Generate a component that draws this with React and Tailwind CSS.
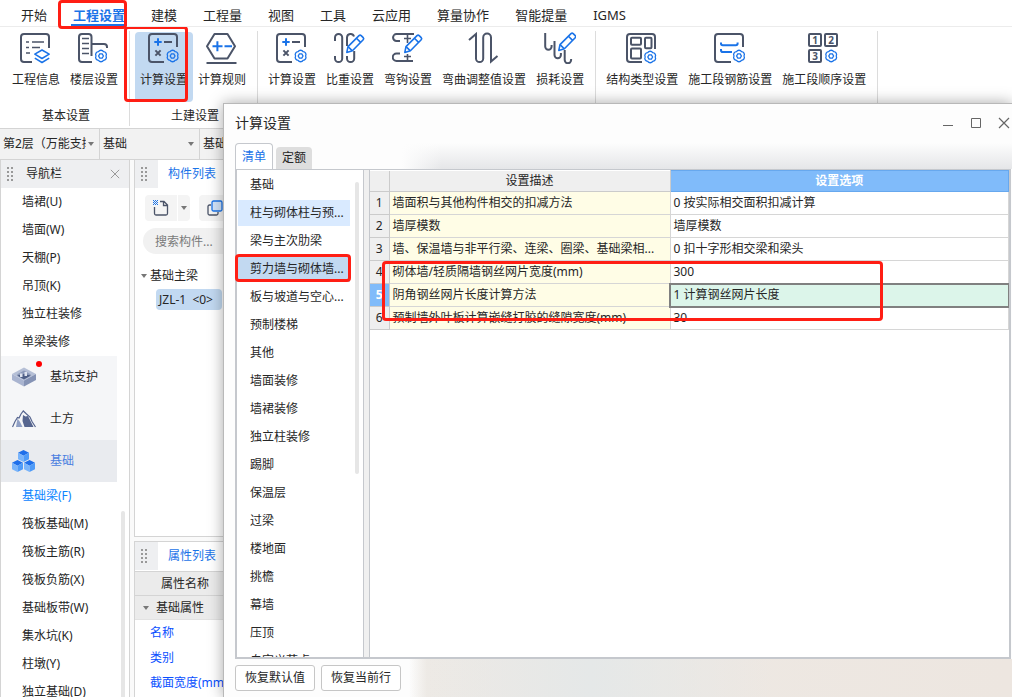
const DARK = "#4b5468";
const BLUE = "#1a73e8";

const menuTabs = ["开始", "工程设置", "建模", "工程量", "视图", "工具", "云应用", "算量协作", "智能提量", "IGMS"];

const finishItems = ["墙裙(U)", "墙面(W)", "天棚(P)", "吊顶(K)", "独立柱装修", "单梁装修"];
const foundationItems = ["基础梁(F)", "筏板基础(M)", "筏板主筋(R)", "筏板负筋(X)", "基础板带(W)", "集水坑(K)", "柱墩(Y)", "独立基础(D)"];

const categories = [
  "基础", "柱与砌体柱与预...", "梁与主次肋梁", "剪力墙与砌体墙...", "板与坡道与空心...", "预制楼梯",
  "其他", "墙面装修", "墙裙装修", "独立柱装修", "踢脚", "保温层", "过梁", "楼地面", "挑檐", "幕墙", "压顶", "自定义节点",
];

const rows = [
  ["墙面积与其他构件相交的扣减方法", "0 按实际相交面积扣减计算"],
  ["墙厚模数", "墙厚模数"],
  ["墙、保温墙与非平行梁、连梁、圈梁、基础梁相...", "0 扣十字形相交梁和梁头"],
  ["砌体墙/轻质隔墙钢丝网片宽度(mm)", "300"],
  ["阴角钢丝网片长度计算方法", "1 计算钢丝网片长度"],
  ["预制墙外叶板计算嵌缝打胶的缝隙宽度(mm)", "30"],
];

/* ---------- ribbon icons ---------- */

function Icon({ children }) {
  return (
    <svg width="32" height="32" viewBox="0 0 32 32" fill="none" stroke={DARK} strokeWidth="2" aria-hidden="true">
      {children}
    </svg>
  );
}

function Gear({ x, y }) {
  return (
    <g transform={`translate(${x} ${y})`} stroke={BLUE} strokeWidth="1.3">
      <path d="M5 0A2.9 2.9 0 0 1 2.5 4.33A2.9 2.9 0 0 1 -2.5 4.33A2.9 2.9 0 0 1 -5 0A2.9 2.9 0 0 1 -2.5 -4.33A2.9 2.9 0 0 1 2.5 -4.33A2.9 2.9 0 0 1 5 0Z" />
      <path d="M2.4 0L1.2 2.1H-1.2L-2.4 0L-1.2 -2.1H1.2Z" />
    </g>
  );
}

function Pencil({ x = 0, y = 0 }) {
  return (
    <g transform={`translate(${x} ${y})`} stroke={BLUE} strokeWidth="1.6" strokeLinejoin="round" fill="#fff">
      <path d="M12.8 20.4L14 14.6L25 3.6a1.6 1.6 0 0 1 2.2 0l2 2a1.6 1.6 0 0 1 0 2.2L18.4 18.8Z" />
      <path d="M22.4 6.2l4.2 4.2M14 14.6l4.4 4.2" />
    </g>
  );
}

function InfoIcon() {
  return (
    <Icon>
      <path d="M12 30H4a3 3 0 0 1-3-3V5a3 3 0 0 1 3-3h22a3 3 0 0 1 3 3v11" />
      <path d="M6 10h3M12 10h12M6 15.5h3M12 15.5h8M6 21h4" strokeWidth="1.6" />
      <g stroke={BLUE} strokeWidth="1.5" strokeLinejoin="round">
        <path d="M22 18l7.2 4.2L22 26.500l-7.2-4.3z" />
        <path d="M14.8 26.2l7.2 4.3l7.2-4.3" />
      </g>
    </Icon>
  );
}

function FloorIcon() {
  return (
    <Icon>
      <path d="M14 30H4a3 3 0 0 1-3-3V5a3 3 0 0 1 3-3h6.500a3 3 0 0 1 3 3V24" />
      <path d="M4 6.500h7M4 11.500h7M4 16.500h7M4 21.500h7" strokeWidth="1.6" />
      <path d="M14 12h12a3 3 0 0 1 3 3v1" />
      <Gear x={23} y={24} />
    </Icon>
  );
}

function CalcIcon() {
  return (
    <Icon>
      <path d="M16 30H4a3 3 0 0 1-3-3V5a3 3 0 0 1 3-3h22a3 3 0 0 1 3 3v10" />
      <path d="M6.3 10h7.4M10 6.3v7.4" stroke={BLUE} />
      <path d="M16 10h8M7.4 18.4l5.2 5.2M12.6 18.4l-5.2 5.2" />
      <Gear x={24.6} y={24} />
    </Icon>
  );
}

function RuleIcon() {
  return (
    <Icon>
      <path d="M8.5 2h13l7.5 12.3L21.5 26.5h-13L1 14.3z" strokeLinejoin="round" />
      <path d="M0.5 31h30" />
      <path d="M6.5 14.3h10M11.4 9.3v10M18.5 14.3h7.500" stroke={BLUE} />
    </Icon>
  );
}

function WeightIcon() {
  return (
    <Icon>
      <path d="M1 9V5.500a3.600 3.600 0 0 1 7.200 0V26.500a3.600 3.600 0 0 1-7.200 0V24" />
      <path d="M13 14V5.500a3.600 3.600 0 0 1 7 -1M20.200 19V26.500a3.600 3.600 0 0 1-7.200 0V24" />
      <Pencil />
    </Icon>
  );
}

function HookIcon() {
  return (
    <Icon>
      <path d="M8 9H4.500a3.400 3.400 0 0 1 0-6.900H22M8 21.500H4.500a3.600 3.600 0 0 0 0 7.500H21" />
      <path d="M15.500 2v9M12 6.500h7M15.500 22v7M12 24.500h7" strokeWidth="1.6" />
      <Pencil />
    </Icon>
  );
}

function CurveIcon() {
  return (
    <Icon>
      <path d="M1 8L8 2V26.500a3.600 3.600 0 0 0 7.200 0V5.500a3.900 3.900 0 0 1 7.800 0V29.500L29.500 24" />
    </Icon>
  );
}

function LossIcon() {
  return (
    <Icon>
      <path d="M1.200 1v13.500a3.200 3.200 0 0 0 6.400 0V13" />
      <path d="M10.500 9v14a3.200 3.200 0 0 0 6.400 0V21" />
      <path d="M20.700 18v10a3.200 3.200 0 0 0 6.400 0V27" />
      <Pencil x={2} y={-2} />
    </Icon>
  );
}

function StructIcon() {
  return (
    <Icon>
      <path d="M16 30H4a3 3 0 0 1-3-3V5a3 3 0 0 1 3-3h22a3 3 0 0 1 3 3v12" />
      <rect x="5" y="5.700" width="10" height="7" rx="1" />
      <rect x="19" y="5.700" width="6.500" height="10.500" rx="1" />
      <rect x="5" y="16.500" width="10" height="10" rx="1" />
      <Gear x={24.2} y={25} />
    </Icon>
  );
}

function RebarIcon() {
  return (
    <Icon>
      <path d="M17 30H4a3 3 0 0 1-3-3V5a3 3 0 0 1 3-3h22a3 3 0 0 1 3 3v10" />
      <path d="M7 10.500v1a1.800 1.800 0 0 0 1.800 1.800h13a1.800 1.800 0 0 0 1.800-1.800v-1M7 17v1.200a1.800 1.800 0 0 0 1.800 1.800H18" stroke={BLUE} />
      <Gear x={25} y={24} />
    </Icon>
  );
}

function OrderIcon() {
  return (
    <Icon>
      <rect x="1" y="2" width="12" height="12" rx="1" />
      <rect x="17" y="2" width="12" height="12" rx="1" />
      <rect x="1" y="18" width="12" height="12" rx="1" />
      <g fill={DARK} stroke="none" fontSize="10" fontWeight="700" textAnchor="middle">
        <text x="7" y="11.600">1</text>
        <text x="23" y="11.600">2</text>
        <text x="7" y="27.600">3</text>
      </g>
      <Gear x={23.2} y={24} />
    </Icon>
  );
}

/* ---------- navigation icons ---------- */

function PitIcon() {
  return (
    <svg width="24" height="20" viewBox="0 0 24 20" aria-hidden="true">
      <path d="M12 0.5L24 7L12 13.5L0 7z" fill="#b5bfd6" />
      <path d="M0 7l12 6.500V19.500L0 13z" fill="#a9b4d0" />
      <path d="M24 7l-12 6.500V19.500L24 13z" fill="#8593b5" />
      <path d="M12 3.500L19 7.500L12 11.500L5 7.500z" fill="#8d9aba" />
      <path d="M5 8.500L12 7l7 1.500L12 12.500z" fill="#4f5f86" />
      <path d="M8 6.500v3.500h2.500V6.500zM12.500 5v4h2.500V5z" fill="#dfe4ef" />
    </svg>
  );
}

function MountainIcon() {
  return (
    <svg width="24" height="18" viewBox="0 0 24 18" fill="none" aria-hidden="true">
      <path d="M5.500 8.500L8 12l2.500 5H4z" fill="#8f9fc4" />
      <path d="M11 5l2.500 1.500l2.500-0.500L21.500 17H12.500L10.500 11z" fill="#56658f" />
      <path d="M0.500 17L3 11.500l2.500-4l1.500 0.500L9 4l2.300-3L14.500 4l3.500 3l2 4.500L23.500 17" stroke="#56658f" strokeWidth="1.2" />
    </svg>
  );
}

function Cube({ x, y }) {
  return (
    <g transform={`translate(${x} ${y})`}>
      <path d="M5.5 0L11 2.8L5.5 5.8L0 2.8z" fill="#1f6fea" />
      <path d="M0 2.800l5.500 3V12L0 9.200z" fill="#79b4fb" />
      <path d="M11 2.800l-5.500 3V12L11 9.200z" fill="#4f9bf8" />
    </g>
  );
}

function CubesIcon() {
  return (
    <svg width="24" height="22" viewBox="0 0 24 22" aria-hidden="true">
      <Cube x={6} y={0} />
      <Cube x={0} y={10} />
      <Cube x={12} y={10} />
    </svg>
  );
}

function Grip() {
  return (
    <svg width="7" height="14" viewBox="0 0 7 14" fill="#999" aria-hidden="true">
      {[0, 4, 8, 12].map((y) => (
        <g key={y}>
          <rect x="0" y={y} width="2" height="2" />
          <rect x="4" y={y} width="2" height="2" />
        </g>
      ))}
    </svg>
  );
}

function Caret({ className = "" }) {
  return (
    <svg width="6" height="4" viewBox="0 0 6 4" className={className} fill="#777" aria-hidden="true">
      <path d="M0 0h6L3 4z" />
    </svg>
  );
}

function Cross({ size, color }) {
  return (
    <svg width={size} height={size} viewBox="0 0 12 12" stroke={color} strokeWidth="1.2" aria-hidden="true">
      <path d="M1 1l10 10M11 1L1 11" />
    </svg>
  );
}

/* ---------- page parts ---------- */

function Tool({ label, icon, active }) {
  return (
    <button className={`flex h-[70px] flex-col items-center px-[5px] whitespace-nowrap ${active ? "rounded bg-[#c2d9f1]" : ""}`}>
      {icon}
      <span className="mt-2 leading-4">{label}</span>
    </button>
  );
}

function ToolGroup({ title, className = "", children }) {
  return (
    <div className="relative flex shrink-0 flex-col border-r border-[#dcdcdc] pt-px pr-[6px] pl-[5px]">
      <div className={`flex ${className}`}>{children}</div>
      <div className="mt-1 pl-1 text-center leading-5">{title}</div>
    </div>
  );
}

function Ribbon() {
  return (
    <div className="mt-1 mb-[2px] flex h-[95px] shrink-0">
      <ToolGroup title="基本设置" className="pl-[2px]">
        <Tool label="工程信息" icon={<InfoIcon />} />
        <Tool label="楼层设置" icon={<FloorIcon />} />
      </ToolGroup>
      <ToolGroup title="土建设置">
        <Tool label="计算设置" icon={<CalcIcon />} active />
        <Tool label="计算规则" icon={<RuleIcon />} />
        <div className="pointer-events-none absolute -top-[5px] -left-[6px] h-[76px] w-[64px] rounded-sm border-3 border-[#ff1e14]" />
      </ToolGroup>
      <ToolGroup title="钢筋设置">
        <Tool label="计算设置" icon={<CalcIcon />} />
        <Tool label="比重设置" icon={<WeightIcon />} />
        <Tool label="弯钩设置" icon={<HookIcon />} />
        <Tool label="弯曲调整值设置" icon={<CurveIcon />} />
        <Tool label="损耗设置" icon={<LossIcon />} />
      </ToolGroup>
      <ToolGroup title="">
        <Tool label="结构类型设置" icon={<StructIcon />} />
        <Tool label="施工段钢筋设置" icon={<RebarIcon />} />
        <Tool label="施工段顺序设置" icon={<OrderIcon />} />
      </ToolGroup>
    </div>
  );
}

function Picker({ label, value }) {
  return (
    <label className="relative flex w-[100px] items-center border-r border-[#d4d4d4]">
      <select aria-label={label} className="h-full w-[86px] appearance-none overflow-hidden pl-[3px] text-[12px] outline-none">
        <option>{value}</option>
      </select>
      <Caret className="absolute right-[5px]" />
    </label>
  );
}

function NavItem({ label, active }) {
  return (
    <a href="#" className={`flex h-7 shrink-0 items-center pl-[21px] ${active ? "text-[#0b84ff]" : ""}`}>
      {label}
    </a>
  );
}

function NavGroup({ label, icon, active, dot }) {
  return (
    <a href="#" className={`relative mr-3 flex h-[42px] shrink-0 items-center pl-[11px] ${active ? "bg-[#e9ebef] text-[#4a7ee0]" : "bg-[#f5f6f8]"}`}>
      <span className="flex w-[38px] items-center">{icon}</span>
      {label}
      {dot && <span className="absolute top-[5px] left-[35px] size-[6px] rounded-full bg-[#ff0000]" />}
    </a>
  );
}

function NavPanel() {
  return (
    <aside className="relative flex w-[130px] shrink-0 flex-col overflow-hidden border-x border-[#d4d4d4] bg-white">
      <div className="flex h-7 shrink-0 items-center bg-[#eeeff1] pl-[6px]">
        <Grip />
        <span className="ml-3 flex-1">导航栏</span>
        <button aria-label="关闭导航栏" className="mr-[9px]">
          <Cross size={10} color="#999" />
        </button>
      </div>
      {finishItems.map((t) => <NavItem key={t} label={t} />)}
      <NavGroup label="基坑支护" icon={<PitIcon />} dot />
      <NavGroup label="土方" icon={<MountainIcon />} />
      <NavGroup label="基础" icon={<CubesIcon />} active />
      <div className="relative flex flex-col">
        {foundationItems.map((t, i) => <NavItem key={t} label={t} active={i === 0} />)}
        <div className="absolute top-[29px] right-[4px] bottom-0 w-1 rounded-full bg-[#e6e6e6]" />
      </div>
    </aside>
  );
}

function PanelHead({ title }) {
  return (
    <div className="flex h-7 shrink-0 items-center">
      <div className="flex h-full w-[23px] items-center bg-[#eeeff1] pl-[6px]"><Grip /></div>
      <span className="ml-[10px] text-[#1a73e8]">{title}</span>
    </div>
  );
}

function ComponentPanel() {
  return (
    <section className="flex flex-1 flex-col border border-t-0 border-[#d4d4d4] bg-white">
      <PanelHead title="构件列表" />
      <div className="mt-[7px] flex pl-[10px]">
        <button aria-label="新建" className="flex h-[26px] w-8 items-center justify-center rounded-l bg-[#f4f4f4]">
          <svg width="16" height="16" viewBox="0 0 16 16" fill="none" stroke={DARK} strokeWidth="1.3">
            <path d="M1.500 7v6.500a1.500 1.500 0 0 0 1.500 1.500h10a1.500 1.500 0 0 0 1.500-1.500V5L11 1.500H7M10.500 1.500V5.500H14.500" />
            <g fill={BLUE} stroke="none">
              {[0, 1, 2, 3, 4].map((y) =>
                [0, 1, 2, 3, 4].map((x) => (x + y) % 2 === 0 && <rect key={`${x}-${y}`} x={x} y={y} width="1" height="1" />)
              )}
            </g>
          </svg>
        </button>
        <button aria-label="新建选项" className="ml-px flex h-[26px] w-3 items-center justify-center rounded-r bg-[#f4f4f4]">
          <Caret />
        </button>
        <button aria-label="复制" className="ml-[9px] flex h-[26px] w-8 items-center justify-center rounded bg-[#f4f4f4]">
          <svg width="16" height="16" viewBox="0 0 16 16" fill="none" strokeWidth="1.3">
            <path d="M4 5H2.500A1.500 1.500 0 0 0 1 6.500v7A1.500 1.500 0 0 0 2.500 15h7a1.500 1.500 0 0 0 1.500-1.500V12" stroke={DARK} />
            <rect x="5" y="1" width="10" height="10" rx="1.5" stroke={BLUE} fill="#d3e4fa" />
          </svg>
        </button>
      </div>
      <input aria-label="搜索构件" placeholder="搜索构件..." className="mt-[7px] ml-2 h-[26px] rounded-full bg-[#f1f1f1] px-3 text-[12px] outline-none placeholder:text-[#7a7a7a]" />
      <div className="mt-3 flex h-5 items-center pl-[6px]">
        <Caret />
        <span className="ml-[3px]">基础主梁</span>
      </div>
      <a href="#" className="mt-[3px] ml-[21px] flex h-[21px] w-[66px] items-center rounded-sm bg-[#c2d9f1] pl-[3px] whitespace-pre">{"JZL-1  <0>"}</a>
    </section>
  );
}

function PropertyPanel() {
  return (
    <section className="flex shrink-0 flex-col border border-b-0 border-[#d4d4d4] bg-white pb-[2px]">
      <PanelHead title="属性列表" />
      <div className="mt-px flex h-[25px] items-center border-y border-[#d4d4d4] bg-[#ebebeb] pl-[26px]">属性名称</div>
      <div className="flex h-6 items-center border-b border-[#e2e2e2] bg-[#ebebeb] pl-2">
        <Caret />
        <span className="ml-[7px]">基础属性</span>
      </div>
      {["名称", "类别", "截面宽度(mm)"].map((t) => (
        <div key={t} className="flex h-[25px] items-center pl-[15px] text-[#0a50ff]">{t}</div>
      ))}
    </section>
  );
}

function SettingsTable() {
  return (
    <div className="relative">
      <table className="w-full table-fixed border-collapse">
        <colgroup>
          <col className="w-[19px]" />
          <col className="w-[281px]" />
          <col />
        </colgroup>
        <thead>
          <tr className="h-[21px]">
            <th className="border-r border-b border-[#cbcbcb] bg-[#efefef]"></th>
            <th className="border-r border-b border-[#cbcbcb] bg-[#efefef] p-0 font-normal">设置描述</th>
            <th className="border border-[#67a8ee] bg-[#80bbfa] p-0 font-bold text-white">设置选项</th>
          </tr>
        </thead>
        <tbody>
          {rows.map(([name, value], i) => {
            const selected = i === 4;
            return (
              <tr key={name} className="h-[23px]">
                <th className={`border-r border-b border-[#cbcbcb] p-0 ${selected ? "bg-[#80bbfa] font-bold text-white" : "bg-[#efefef] font-normal"}`}>{i + 1}</th>
                <td className="overflow-hidden border-r border-b border-[#d6d6d6] bg-[#fffde6] p-0 pl-[3px] whitespace-nowrap">{name}</td>
                <td className={`border-r border-b border-[#d6d6d6] p-0 pl-[3px] ${selected ? "bg-[#dcf5ea] outline-2 -outline-offset-1 outline-[#808080]" : "bg-white"}`}>{value}</td>
              </tr>
            );
          })}
        </tbody>
      </table>
      <div className="pointer-events-none absolute top-[91px] left-[12px] h-[60px] w-[501px] rounded-sm border-3 border-[#ff1e14]" />
    </div>
  );
}

function CategoryList() {
  return (
    <div className="relative flex w-[127px] shrink-0 flex-col border-r border-[#c5c8cd] bg-white">
      <div className="flex min-h-0 flex-1 flex-col overflow-y-clip pt-px">
        {categories.map((t, i) => (
          <button
            key={t}
            className={`relative my-px mr-[13px] ml-px h-[26px] shrink-0 pl-[12px] text-left whitespace-nowrap ${i === 1 ? "bg-[#d9eaff]" : i === 3 ? "bg-[#c2d9f1]" : ""}`}
          >
            {t}
            {i === 3 && <span className="absolute -top-[2px] -right-px bottom-0 -left-[3px] rounded-sm border-3 border-[#ff1e14]" />}
          </button>
        ))}
      </div>
      <div className="absolute top-[12px] right-[4px] h-3/5 w-1 rounded-full bg-[#e6e6e6]" />
    </div>
  );
}

function SettingsDialog() {
  return (
    <div role="dialog" aria-label="计算设置" className="absolute top-[103px] right-0 bottom-0 left-[223px] flex flex-col border-t border-l border-[#b8b8b8] bg-[#fdfdfd] shadow-[0_0_14px_rgba(0,0,0,0.35)]">
      <div className="flex h-[39px] shrink-0 items-center pb-[2px] pl-[11px]">
        <h2 className="flex-1 text-[14px]">计算设置</h2>
        <div className="flex items-center gap-4 pr-[2px]">
          <button aria-label="最小化">
            <svg width="12" height="12" viewBox="0 0 12 12" fill="#666"><path d="M1 8h10v1H1z" /></svg>
          </button>
          <button aria-label="最大化">
            <svg width="12" height="12" viewBox="0 0 12 12" fill="none" stroke="#666"><path d="M1.500 1.500h9v9h-9z" /></svg>
          </button>
          <button aria-label="关闭">
            <Cross size={12} color="#666" />
          </button>
        </div>
      </div>

      <div className="flex h-[26px] shrink-0 items-end pl-[11px]">
        <button className="h-[26px] w-[38px] rounded-t border border-b-0 border-[#c5c8cd] bg-white text-[#1a73e8]">清单</button>
        <button className="ml-[3px] h-[22px] w-9 rounded-t bg-[#dedede]">定额</button>
        <div className="ml-[90px] h-full flex-1 bg-linear-to-b from-[#fdfdfd] to-[#e5e6e8]">
          <div className="h-full w-10 bg-linear-to-r from-[#fdfdfd] to-transparent" />
        </div>
      </div>

      <div className="mr-px ml-[11px] flex min-h-0 flex-1 border-2 border-t border-[#c5c8cd] bg-[#f0f0f0]">
        <CategoryList />
        <div className="ml-[5px] min-w-0 flex-1 overflow-hidden border-l border-[#c5c8cd] bg-white">
          <SettingsTable />
        </div>
      </div>

      <div className="flex h-[38px] shrink-0">
        <div className="flex w-[185px] items-center gap-[6px] pl-[11px] whitespace-nowrap">
          <button className="h-[26px] w-20 rounded-[3px] border border-[#c6c6c6] bg-white">恢复默认值</button>
          <button className="h-[26px] w-20 rounded-[3px] border border-[#c6c6c6] bg-white">恢复当前行</button>
        </div>
        <div className="flex-1 bg-linear-to-r from-[#fdfdfd] from-0% via-[#eeeae5] via-3% to-[#ede6e0]">
          <div className="h-full w-3/5 bg-linear-to-r from-transparent via-[#e5e8e8] to-transparent" />
        </div>
      </div>
    </div>
  );
}

export default function App() {
  return (
    <div className="relative flex h-screen flex-col overflow-hidden bg-white font-['Noto_Sans','Noto_Sans_CJK_SC',sans-serif] text-[12px] leading-4 text-[#262626]">
      {/* Menu */}
      <nav className="relative z-10 flex h-[27px] shrink-0 items-center gap-[26px] border-b border-[#ececec] pt-[3px] pl-[21px] text-[13px] whitespace-nowrap">
        {menuTabs.map((t) => {
          if (t !== "工程设置") return <a key={t} href="#">{t}</a>;
          return (
            <a key={t} href="#" className="relative flex h-full items-center font-bold text-[#1a73e8]">
              {t}
              <span className="absolute -inset-x-[2px] bottom-0 h-[2px] bg-[#1a73e8]" />
              <span className="absolute -top-[3px] -right-[2px] -bottom-[3px] -left-[15px] rounded-sm border-3 border-[#ff1e14]" />
            </a>
          );
        })}
      </nav>

      <Ribbon />

      {/* Floor and component pickers */}
      <div className="flex h-8 shrink-0 border-y border-[#d4d4d4] bg-[#f2f2f2]">
        <Picker label="楼层" value="第2层（万能支撑）" />
        <Picker label="构件类型" value="基础" />
        <Picker label="构件" value="基础梁" />
      </div>

      <div className="flex min-h-0 flex-1 gap-1 bg-[#fafafa]">
        <NavPanel />
        <div className="flex min-w-0 flex-1 flex-col gap-1">
          <ComponentPanel />
          <PropertyPanel />
        </div>
      </div>

      <SettingsDialog />
    </div>
  );
}
